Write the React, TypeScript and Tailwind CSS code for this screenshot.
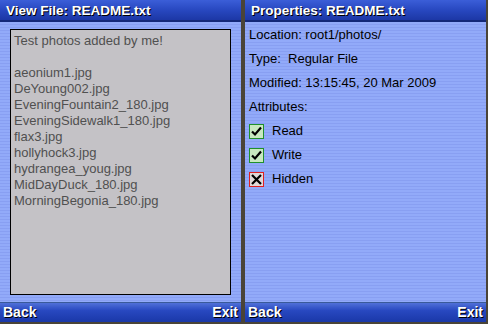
const stripes = "bg-[repeating-linear-gradient(180deg,#92aaf9_0px,#92aaf9_2px,#889ff2_2px,#889ff2_3px)]"

const TitleBar = ({ title }: { title: string }) => (
  <div className="flex h-[22px] items-center bg-[linear-gradient(180deg,#3b5ed8_0%,#2848c0_45%,#1a34a0_100%)] px-[6px] shadow-[inset_0_-2px_0_#142878]">
    <span className="text-[13.5px] font-bold text-white [text-shadow:1px_1px_0_#000]">{title}</span>
  </div>
)

const SoftKeys = () => (
  <div className="flex h-[20px] items-center justify-between border-t border-[#3a5a9a] bg-[linear-gradient(180deg,#5070d8_0%,#2848c0_40%,#1a38a8_100%)] px-[3px]">
    <span className="text-[14px] font-bold text-white [text-shadow:1px_1px_0_#000]">Back</span>
    <span className="text-[14px] font-bold text-white [text-shadow:1px_1px_0_#000]">Exit</span>
  </div>
)

const Check = ({ on }: { on: boolean }) => (
  <span
    className={
      on
        ? "flex h-[15px] w-[15px] items-center justify-center border border-[#20902c] bg-[#c8e8c0]"
        : "flex h-[15px] w-[15px] items-center justify-center border border-[#e02020] bg-[#e0d8d8]"
    }
  >
    {on ? (
      <svg width="13" height="13" viewBox="0 0 13 13">
        <path d="M2 6.5 L5 9.5 L11 2.5" stroke="#000" strokeWidth="2.2" fill="none" />
      </svg>
    ) : (
      <svg width="13" height="13" viewBox="0 0 13 13">
        <path d="M2 2 L11 11 M11 2 L2 11" stroke="#000" strokeWidth="2.2" fill="none" />
      </svg>
    )}
  </span>
)

const files = [
  "aeonium1.jpg",
  "DeYoung002.jpg",
  "EveningFountain2_180.jpg",
  "EveningSidewalk1_180.jpg",
  "flax3.jpg",
  "hollyhock3.jpg",
  "hydrangea_youg.jpg",
  "MidDayDuck_180.jpg",
  "MorningBegonia_180.jpg",
]

export default function App() {
  return (
    <div className="flex h-[324px] w-[488px] gap-[4px] bg-[#4a4438] pb-[2px] pr-[2px] font-['Liberation_Sans',Arial,sans-serif]">
      <div className="flex w-[241px] flex-col">
        <TitleBar title="View File: README.txt" />
        <div className={`flex flex-1 flex-col px-[10px] pb-[7px] pt-[7px] ${stripes}`}>
          <div className="flex-1 border border-black bg-[#c4c2c6] px-[3px] pt-[3px] text-[13px] leading-[16px] text-[#505050]">
            <div>Test photos added by me!</div>
            <div className="h-[16px]" />
            {files.map((f) => (
              <div key={f}>{f}</div>
            ))}
          </div>
        </div>
        <SoftKeys />
      </div>
      <div className="flex flex-1 flex-col">
        <TitleBar title="Properties: README.txt" />
        <div className={`flex flex-1 flex-col gap-[8px] px-[4px] pt-[5px] text-[13px] leading-[16px] text-black ${stripes}`}>
          <div>Location: root1/photos/</div>
          <div>Type:&nbsp; Regular File</div>
          <div>Modified: 13:15:45, 20 Mar 2009</div>
          <div>Attributes:</div>
          <div className="flex items-center gap-[8px]"><Check on />Read</div>
          <div className="flex items-center gap-[8px]"><Check on />Write</div>
          <div className="flex items-center gap-[8px]"><Check on={false} />Hidden</div>
        </div>
        <SoftKeys />
      </div>
    </div>
  )
}
